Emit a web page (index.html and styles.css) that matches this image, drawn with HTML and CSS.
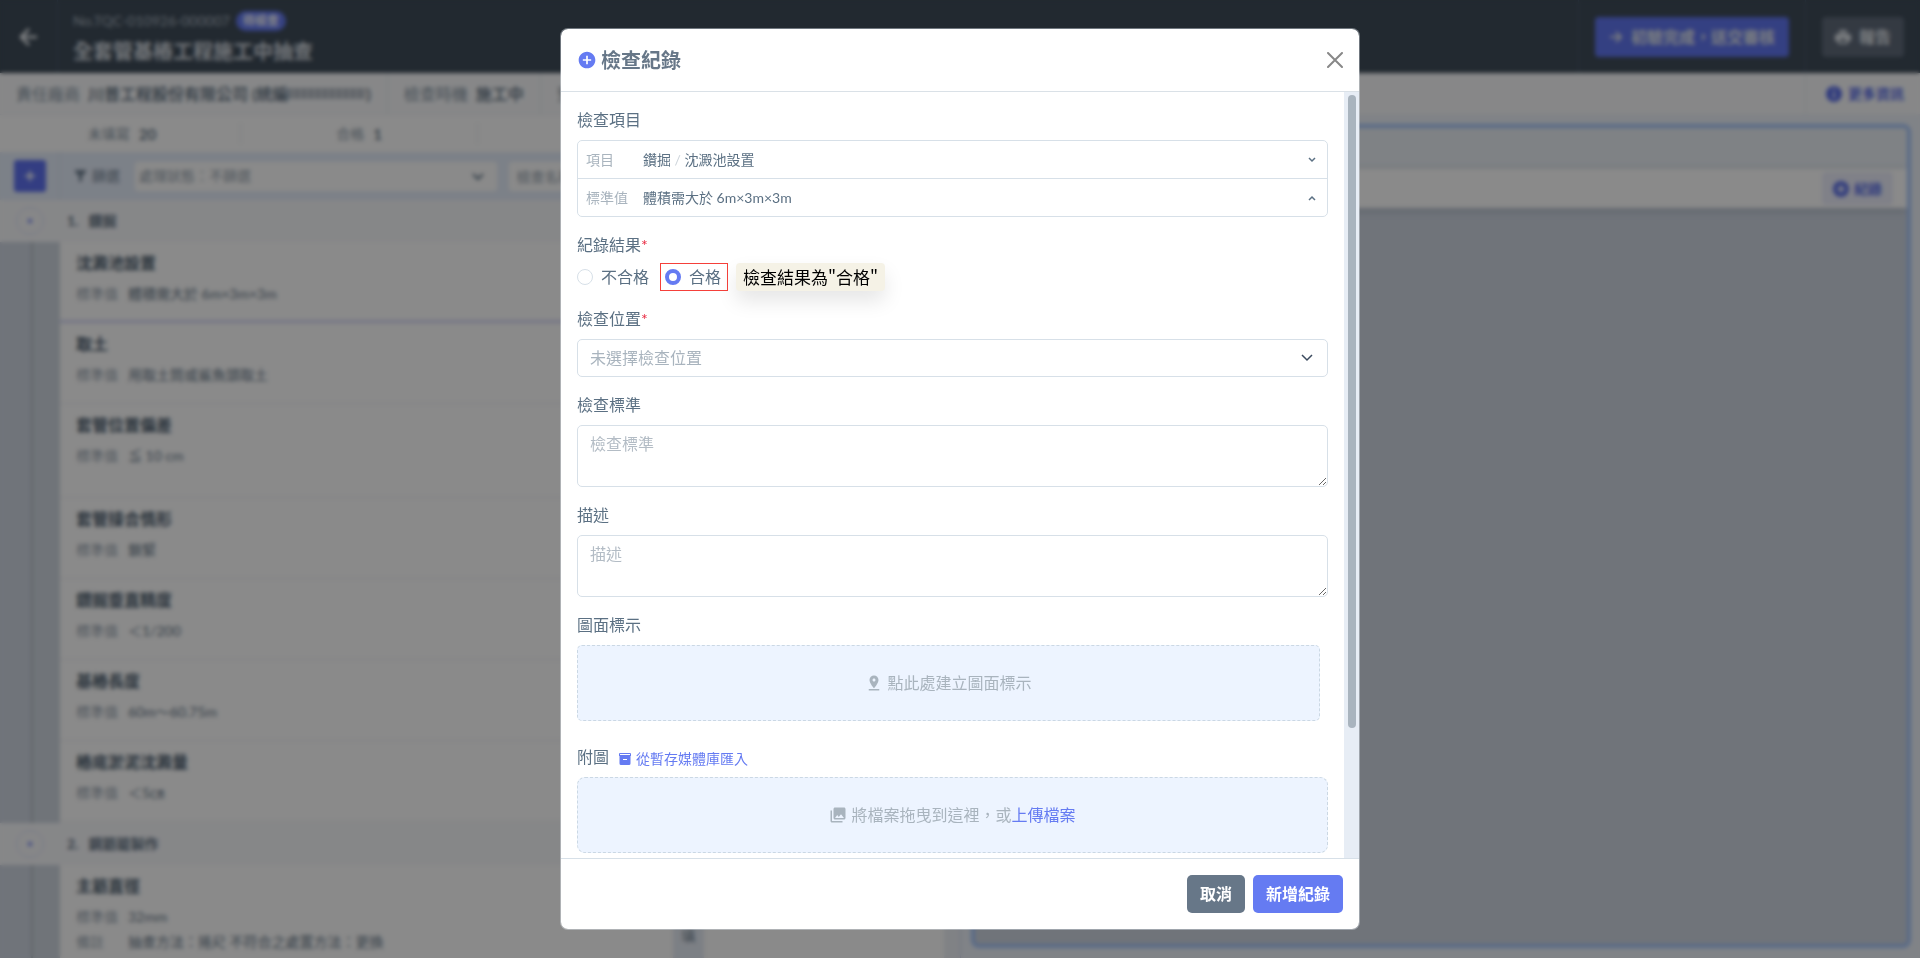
FILE: index.html
```html
<!DOCTYPE html>
<html lang="zh-Hant">
<head>
<meta charset="utf-8">
<title>檢查紀錄</title>
<link rel="stylesheet" href="styles.css">
</head>
<body>
<div class="app">
  <header class="topbar">
    <div class="topbar-back">
      <button class="icon-btn" type="button" aria-label="返回">
        <svg width="24" height="24" viewBox="0 0 24 24" fill="none" stroke="currentColor" stroke-width="2.5"><path d="M20 12H5M12 4l-8 8 8 8"/></svg>
      </button>
    </div>
    <div class="topbar-title">
      <div class="serial"><span>No.TQC-010926-000007</span><span class="badge">待檢查</span></div>
      <h1>全套管基樁工程施工中抽查</h1>
    </div>
    <div class="topbar-action">
      <button class="btn btn-primary btn-wide" type="button">
        <svg width="14" height="14" viewBox="0 0 14 14" fill="none" stroke="currentColor" stroke-width="2"><path d="M1 7h11M7 2l5 5-5 5"/></svg>
        <span>初驗完成，送交審核</span>
      </button>
    </div>
    <div class="topbar-action">
      <button class="btn btn-dark" type="button">
        <svg width="16" height="16" viewBox="0 0 16 16" fill="currentColor"><path d="M4 1h8v3H4zM2 5h12a2 2 0 0 1 2 2v5h-3v3H3v-3H0V7a2 2 0 0 1 2-2zm3 5v3h6v-3z"/></svg>
        <span>報告</span>
      </button>
    </div>
  </header>

  <div class="infobar">
    <div class="info-cell"><span class="muted">責任廠商</span><b>川普工程股份有限公司 (統編<span class="mask"></span>)</b></div>
    <div class="info-cell"><span class="muted">檢查時機</span><b>施工中</b></div>
    <div class="info-cell info-grow"><span class="muted">預定日期</span></div>
    <div class="info-more">
      <button class="link-btn" type="button">
        <svg width="16" height="16" viewBox="0 0 16 16"><circle cx="8" cy="8" r="8" fill="currentColor"/><path d="M8 7v5M8 3v2" stroke="#fff" stroke-width="2"/></svg>
        更多資訊
      </button>
    </div>
  </div>

  <main class="workspace">
    <section class="list-pane">
      <div class="stats">
        <div class="stat"><span>未填寫</span><b>20</b></div>
        <div class="stat"><span>合格</span><b>1</b></div>
        <div class="stat"><span>不合格</span><b>0</b></div>
        <div class="stat"><span>不適用</span><b>0</b></div>
      </div>
      <div class="filter">
        <div class="filter-add"><button class="btn-square" type="button" aria-label="新增">
          <svg width="12" height="12" viewBox="0 0 12 12" stroke="currentColor" stroke-width="2"><path d="M6 1v10M1 6h10"/></svg>
        </button></div>
        <div class="filter-label">
          <svg width="11" height="12" viewBox="0 0 11 12" fill="currentColor"><path d="M0 0h11v2L7 6v5l-3 1V6L0 2z"/></svg>
          <label for="status">篩選</label>
        </div>
        <div class="filter-select">
          <select id="status" class="filter-input"><option>處理狀態：不篩選</option></select>
          <svg class="filter-caret" width="12" height="8" viewBox="0 0 12 8" fill="none" stroke="#5f7386" stroke-width="2"><path d="M1 1l5 5 5-5"/></svg>
        </div>
        <input class="filter-input filter-name" type="text" placeholder="檢查名稱" aria-label="檢查名稱">
      </div>
      <div class="group-list">
        <div class="group-head"><span class="toggle"></span><b>1.</b><b>鑽掘</b></div>
        <div class="group-body">
          <div class="rail"></div>
          <div class="rows">
            <article class="row row-active"><h2>沈澱池設置</h2><p><span>標準值</span><em>體積需大於 6m×3m×3m</em></p></article>
            <article class="row"><h2>取土</h2><p><span>標準值</span><em>用取土筒或鯊魚頭取土</em></p></article>
            <article class="row row-tall"><h2>套管位置偏差</h2><p><span>標準值</span><em>≦ 10 cm</em></p></article>
            <article class="row"><h2>套管接合情形</h2><p><span>標準值</span><em>鎖緊</em></p></article>
            <article class="row"><h2>鑽掘垂直精度</h2><p><span>標準值</span><em>＜1/200</em></p></article>
            <article class="row"><h2>基樁長度</h2><p><span>標準值</span><em>60m～60.75m</em></p></article>
            <article class="row"><h2>樁底淤泥沈澱量</h2><p><span>標準值</span><em>＜5㎝</em></p></article>
          </div>
          <div class="side-tab"></div>
          <div class="side-space"></div>
        </div>
        <div class="group-head"><span class="toggle"></span><b>2.</b><b>鋼筋籠製作</b></div>
        <div class="group-body">
          <div class="rail"></div>
          <div class="rows">
            <article class="row row-tall"><h2>主筋直徑</h2><p><span>標準值</span><em>32mm</em></p><p><span>備註</span><em>抽查方法：捲尺 不符合之處置方法：更換</em></p></article>
          </div>
          <div class="side-tab">填</div>
          <div class="side-space"></div>
        </div>
      </div>
    </section>

    <section class="detail-pane">
      <div class="detail">
        <div class="detail-head"></div>
        <div class="detail-tools">
          <button class="btn-soft" type="button">
            <svg width="16" height="16" viewBox="0 0 16 16"><circle cx="8" cy="8" r="8" fill="currentColor"/><path d="M8 4v8M4 8h8" stroke="#fff" stroke-width="2"/></svg>
            紀錄
          </button>
        </div>
        <div class="detail-body"></div>
      </div>
    </section>
  </main>
</div>

<div class="backdrop">
  <form class="modal" role="dialog" aria-labelledby="modal-title">
    <header class="modal-head">
      <svg width="20" height="20" viewBox="0 0 24 24"><path fill="#657bf2" d="M12 2C6.48 2 2 6.48 2 12s4.480 10 10 10 10-4.480 10-10S17.520 2 12 2zm5 11h-4v4h-2v-4H7v-2h4V7h2v4h4v2z"/></svg>
      <h2 id="modal-title">檢查紀錄</h2>
      <button class="close" type="button" aria-label="關閉">
        <svg width="16" height="16" viewBox="0 0 16 16" stroke="currentColor" stroke-width="2" stroke-linecap="round"><path d="M1 1l14 14M15 1L1 15"/></svg>
      </button>
    </header>

    <div class="modal-main">
      <div class="modal-body">
        <div class="field">
          <div class="label">檢查項目</div>
          <div class="item-box">
            <div class="item-row">
              <span class="item-key">項目</span>
              <span class="item-value">鑽掘 <i>/</i> 沈澱池設置</span>
              <button class="caret" type="button" aria-label="展開"><svg width="8" height="6" viewBox="0 0 8 6" fill="none" stroke="currentColor" stroke-width="1.5"><path d="M1 1l3 3 3-3"/></svg></button>
            </div>
            <div class="item-row">
              <span class="item-key">標準值</span>
              <span class="item-value">體積需大於 6m×3m×3m</span>
              <button class="caret" type="button" aria-label="收合"><svg width="8" height="6" viewBox="0 0 8 6" fill="none" stroke="currentColor" stroke-width="1.5"><path d="M1 5l3-3 3 3"/></svg></button>
            </div>
          </div>
        </div>

        <div class="field">
          <div class="label label-tight">紀錄結果<span class="req">*</span></div>
          <div class="choices">
            <label class="choice"><input type="radio" name="result">不合格</label>
            <label class="choice choice-marked"><input type="radio" name="result" checked>合格</label>
            <span class="note">檢查結果為"合格"</span>
          </div>
        </div>

        <div class="field">
          <label class="label" for="place">檢查位置<span class="req">*</span></label>
          <div class="select-wrap">
            <select id="place" class="control"><option>未選擇檢查位置</option></select>
            <svg class="select-caret" width="12" height="8" viewBox="0 0 12 8" fill="none" stroke="#3b4a5e" stroke-width="1.5"><path d="M1 1l5 5 5-5"/></svg>
          </div>
        </div>

        <div class="field">
          <label class="label" for="standard">檢查標準</label>
          <textarea id="standard" class="control" rows="2" placeholder="檢查標準"></textarea>
        </div>

        <div class="field">
          <label class="label" for="desc">描述</label>
          <textarea id="desc" class="control" rows="2" placeholder="描述"></textarea>
        </div>

        <div class="field field-wide">
          <div class="label">圖面標示</div>
          <button class="drop drop-mark" type="button">
            <svg width="18" height="18" viewBox="0 0 24 24" fill="currentColor"><path d="M18 8c0-3.310-2.690-6-6-6S6 4.690 6 8c0 4.500 6 11 6 11s6-6.500 6-11zm-8 0c0-1.100.9-2 2-2s2 .9 2 2-.89 2-2 2c-1.100 0-2-.9-2-2zM5 20v2h14v-2H5z"/></svg>
            點此處建立圖面標示
          </button>
        </div>

        <div class="field">
          <div class="label label-row">附圖
            <button class="import" type="button">
              <svg width="12" height="12" viewBox="0 0 12 12" fill="currentColor"><path fill-rule="evenodd" d="M1 0h10a1 1 0 0 1 1 1v2H0V1a1 1 0 0 1 1-1zM1 1v1h10V1z"/><path fill-rule="evenodd" d="M0.500 3h11v7.500A1.500 1.500 0 0 1 10 12H2A1.500 1.500 0 0 1 .5 10.500zM4 6v1h4V6z"/></svg>
              從暫存媒體庫匯入
            </button>
          </div>
          <div class="drop drop-file">
            <svg width="18" height="18" viewBox="0 0 24 24" fill="currentColor"><path d="M22 16V4c0-1.100-.9-2-2-2H8c-1.100 0-2 .9-2 2v12c0 1.100.9 2 2 2h12c1.100 0 2-.9 2-2zm-11-4l2.030 2.710L16 11l4 5H8l3-4zM2 6v14c0 1.100.9 2 2 2h14v-2H4V6H2z"/></svg>
            <span>將檔案拖曳到這裡，或<a href="#upload">上傳檔案</a></span>
          </div>
        </div>
      </div>
      <div class="track"><div class="thumb"></div></div>
    </div>

    <footer class="modal-foot">
      <button class="btn-foot btn-cancel" type="button">取消</button>
      <button class="btn-foot btn-save" type="submit">新增紀錄</button>
    </footer>
  </form>
</div>
</body>
</html>
```

FILE: styles.css
```css
* { box-sizing: border-box; }

body {
  margin: 0;
  font-family: Lato, "Noto Sans CJK TC", sans-serif;
  font-size: 16px;
  line-height: 24px;
  color: #5b7083;
  overflow: hidden;
}

h1, h2, p { margin: 0; }
em, i { font-style: normal; }
svg { flex: none; display: block; }
button, input, select, textarea { font: inherit; color: inherit; margin: 0; }
button { cursor: pointer; border: 0; background: none; padding: 0; }

/* Application behind the dialog */
.app { height: 100vh; display: flex; flex-direction: column; overflow: hidden; }

.topbar { display: flex; flex: none; height: 73px; background: #3f4c59; color: #f4f7fa; }
.topbar-back { width: 58px; display: grid; place-items: center; border-right: 1px solid #4c5c70; }
.topbar-title { flex: 1; padding: 10px 15px; }
.serial { display: flex; align-items: center; gap: 6px; font-size: 14px; line-height: 22px; color: #aab5c0; }
.badge { padding: 0 7px; border-radius: 10px; background: #657bf2; color: #fff; font-size: 12px; font-weight: 700; line-height: 20px; }
h1 { font-size: 20px; line-height: 38px; color: #d4dae0; }
.topbar-action { display: flex; align-items: center; padding: 0 16px; border-left: 1px solid #4c5c70; }
.btn { height: 40px; display: flex; align-items: center; gap: 8px; padding: 0 13px; border-radius: 4px; font-weight: 700; color: #e4e9ee; }
.btn-wide { padding: 0 14px; }
.btn-primary { background: #6176f0; }
.btn-dark { background: #606b7b; }

.infobar { display: flex; flex: none; height: 42px; background: #f9fafc; border-bottom: 1px solid #edf0f5; }
.info-cell { display: flex; align-items: center; gap: 8px; padding: 0 16px; border-right: 1px solid #e4e9f0; color: #566878; }
.info-grow { flex: 1; border-right: 0; }
.info-cell b { display: flex; align-items: center; white-space: pre; font-weight: 500; }
.muted { color: #8493a1; }
.mask { width: 78px; height: 11px; background: repeating-linear-gradient(90deg, #b2b9c2 0 4px, #cdd2d8 4px 7px); }
.info-more { display: flex; align-items: center; padding: 0 16px 0 20px; border-left: 1px solid #e4e9f0; }
.link-btn { display: flex; align-items: center; gap: 6px; color: #5a6ee8; font-size: 14px; font-weight: 700; }

.workspace { flex: 1; min-height: 0; display: flex; }
.list-pane { flex: none; width: 50%; display: flex; flex-direction: column; background: #fff; }
.stats { display: flex; flex: none; height: 37px; padding: 8px 8px 8px 4px; }
.stat { flex: 1; display: flex; align-items: center; justify-content: center; gap: 9px; font-size: 14px; color: #8796a4; border-right: 1px solid #e8ecf0; }
.stat b { font-size: 15px; font-weight: 700; color: #6c7d8d; }

.filter { display: flex; flex: none; align-items: center; height: 48px; background: #e6eefb; }
.filter-add { width: 60px; height: 100%; padding-left: 14px; display: flex; align-items: center; border-right: 1px solid #d7e0ee; }
.btn-square { width: 32px; height: 32px; border-radius: 3px; background: #5f72f0; color: #fff; display: grid; place-items: center; }
.filter-label { display: flex; align-items: center; gap: 6px; padding: 0 15px; font-size: 14px; color: #6f8091; }
.filter-input { width: 100%; height: 29px; padding: 0 8px; border: 0; border-radius: 3px; background: #fff; font-size: 14px; color: #95a2ae; appearance: none; }
.filter-input::placeholder { color: #95a2ae; }
.filter-select { position: relative; flex: 1; margin-right: 12px; }
.filter-select .filter-input { padding: 0 4px; }
.filter-caret { position: absolute; right: 13px; top: 11px; }
.filter-name { flex: 1; min-width: 0; margin-right: 74px; }

.group-list { flex: 1; min-height: 0; overflow: hidden; padding-right: 16px; background: #edf0f5; }
.group-head { display: flex; align-items: center; gap: 10px; height: 42px; padding-left: 16px; background: #f8f9fc; font-size: 14px; color: #5e6f80; }
.toggle { width: 28px; height: 28px; margin-right: 13px; border: 1px solid #dcdff9; border-radius: 14px; display: grid; place-items: center; }
.toggle::before { content: ""; width: 4px; height: 4px; border-radius: 2px; background: #6478f0; }
.group-body { display: flex; }
.rail { flex: none; width: 60px; background: linear-gradient(90deg, #cfd6e2 31px, #b4bdc4 31px 33px, #cfd7e0 33px); }
.rows { flex: 1; min-width: 0; padding-bottom: 1px; background: #fff; }
.row { height: 81px; padding: 9px 16px; border-bottom: 1px solid #eceff2; }
.row-active { border-bottom: 3px solid #d5d9f8; }
.row-tall { height: 94px; }
.row h2 { font-size: 16px; line-height: 24px; margin-bottom: 6px; color: #4b5c6d; }
.row p { display: flex; font-size: 14px; line-height: 25px; }
.row span { width: 52px; color: #98a4b0; }
.row em { color: #657687; }
.side-tab { flex: none; width: 31px; padding-top: 61px; background: #e6ecf5; text-align: center; font-size: 14px; line-height: 20px; color: #6c7d8d; }
.side-space { width: 240px; flex: none; background: #fff; }

.detail-pane { flex: 1; min-width: 0; display: flex; padding: 9px 9px 10px 10px; background: #edf2f9; border-left: 1px solid #ccd4ee; }
.detail { flex: 1; display: flex; flex-direction: column; border: 4px solid #a5c5fa; border-radius: 8px; overflow: hidden; background: #cfd6e2; }
.detail-head { height: 41px; background: #ebf0f6; }
.detail-tools { height: 39px; display: flex; align-items: center; justify-content: flex-end; padding-right: 14px; background: #fff; box-shadow: 0 2px 8px rgba(90, 110, 130, 0.3); }
.btn-soft { height: 33px; display: flex; align-items: center; gap: 5px; padding: 0 11px; border-radius: 4px; background: #eceefc; color: #5a6ee8; font-size: 14px; font-weight: 700; }

/* Dialog */
.backdrop {
  position: fixed;
  inset: 0;
  padding: 28px 16px;
  display: flex;
  justify-content: center;
  background: rgba(0, 0, 0, 0.46);
  backdrop-filter: blur(2px);
}
.modal {
  width: 100%;
  max-width: 800px;
  display: flex;
  flex-direction: column;
  background: #fff;
  background-clip: padding-box;
  border: 1px solid rgba(231, 238, 245, 0.4);
  border-radius: 8px;
  overflow: hidden;
}
.modal-head { flex: none; height: 63px; display: flex; align-items: center; gap: 4px; padding: 0 16px; border-bottom: 1px solid #dae1e7; }
.modal-head h2 { flex: 1; font-size: 20px; font-weight: 700; color: #677788; }
.close { color: #888; }

.modal-main { flex: 1; min-height: 0; display: flex; }
.modal-body { flex: 1; min-width: 0; padding: 16px; overflow-y: auto; scrollbar-width: none; }
.track { flex: none; width: 15px; padding: 3px 3px 0 4px; background: #e7edf5; }
.thumb { height: 83%; border-radius: 4px; background: #a9b4be; }

.field { margin-bottom: 16px; }
.field-wide { margin-bottom: 24px; }
.label { display: block; margin-bottom: 8px; }
.label-tight { margin-bottom: 6px; }
.req { color: #e8283f; }

.item-box { border: 1px solid #d7e0e8; border-radius: 5px; font-size: 14px; }
.item-row { display: flex; align-items: center; height: 37px; padding: 0 11px 0 8px; }
.item-row + .item-row { height: 38px; border-top: 1px solid #d7e0e8; }
.item-key { width: 57px; color: #a9b4be; }
.item-value { flex: 1; }
.item-value i { color: #cdd4da; }

.choices { display: flex; align-items: center; height: 28px; }
.choice { display: flex; align-items: center; gap: 8px; height: 28px; }
.choice-marked { margin: 0 8px 0 11px; padding: 0 6px 0 4px; border: 1px solid #f5403a; }
.choice input { appearance: none; width: 16px; height: 16px; border: 1px solid #d7e0e8; border-radius: 8px; background: #fff; }
.choice input:checked { border: 4px solid #657bf2; }
.note { padding: 0 7px; border-radius: 4px; background: #f5f2e6; color: #000; font-family: "Noto Sans CJK TC", sans-serif; font-size: 17px; line-height: 28px; box-shadow: 0 10px 20px rgba(0, 0, 0, 0.1); }

.control { display: block; width: 100%; padding: 6px 12px; border: 1px solid #d7e0e8; border-radius: 5px; background: #fff; line-height: 24px; outline: 0; }
.control::placeholder { color: #b3bcc5; opacity: 1; }
select.control { height: 38px; appearance: none; color: #a9b4be; }
textarea.control { height: 62px; resize: vertical; overflow: auto; }
.select-wrap { position: relative; }
.select-caret { position: absolute; right: 15px; top: 15px; pointer-events: none; }

.drop { display: flex; align-items: center; justify-content: center; gap: 4px; height: 76px; border: 1px dashed #cbd8e4; background: #edf4ff; color: #a9b4be; }
.drop-mark { width: calc(100% - 8px); border-radius: 5px; }
.drop-file { border-radius: 8px; }
.drop a { color: #657bf2; text-decoration: none; }
.label-row { display: flex; align-items: center; gap: 10px; }
.import { display: flex; align-items: center; gap: 5px; padding-top: 4px; font-size: 14px; line-height: 20px; color: #657bf2; }

.modal-foot { flex: none; display: flex; justify-content: flex-end; gap: 8px; padding: 16px; border-top: 1px solid #d7e0e8; }
.btn-foot { height: 38px; padding: 0 13px; border-radius: 5px; color: #fff; font-weight: 700; }
.btn-cancel { background: #677788; }
.btn-save { background: #657bf2; }
```
